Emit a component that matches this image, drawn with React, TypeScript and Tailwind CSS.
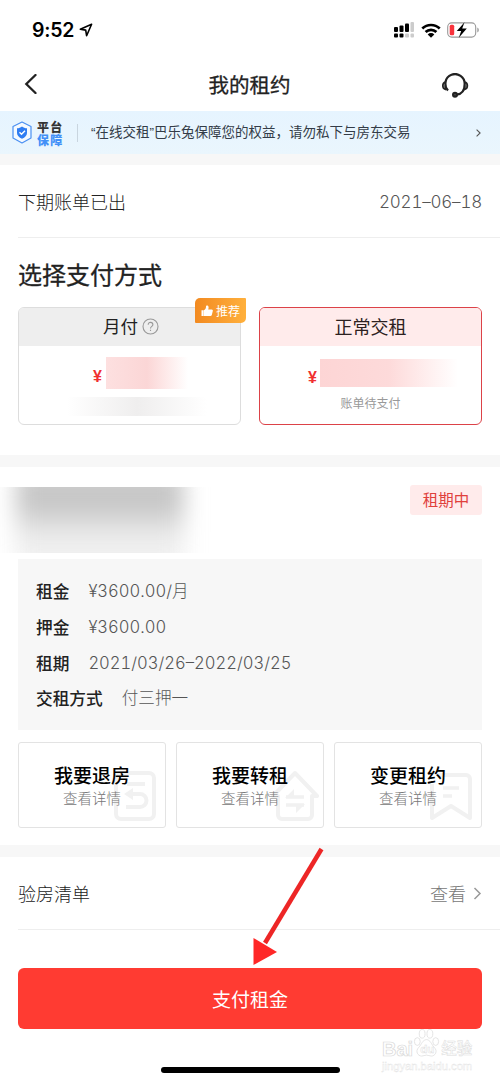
import React from 'react';

type DetailRow = {
  label: string;
  value: string;
};

type ActionItem = {
  title: string;
  icon: React.ReactNode;
};

const details: DetailRow[] = [
  { label: '租金', value: '¥3600.00/月' },
  { label: '押金', value: '¥3600.00' },
  { label: '租期', value: '2021/03/26–2022/03/25' },
  { label: '交租方式', value: '付三押一' },
];

const CheckoutIcon = () => (
  <svg className="h-[52px] w-[44px]" viewBox="0 0 44 52" fill="none" stroke="currentColor" strokeWidth="4">
    <rect x="3" y="3" width="38" height="46" rx="5" />
    <path d="M14 14h18M15 24h12a5.500 5.500 0 0 1 0 13H13" />
    <path d="M20 18v12l-9-6z" fill="currentColor" stroke="none" />
  </svg>
);

const SubletIcon = () => (
  <svg className="-mr-1 h-[52px] w-[48px]" viewBox="0 0 48 52" fill="none" stroke="currentColor" strokeWidth="4" strokeLinejoin="round">
    <path d="M7 26H2L24 3l22 23h-5v19a4 4 0 0 1-4 4H11a4 4 0 0 1-4-4z" />
    <path d="M15 27h18M15 35h18" strokeWidth="3.500" />
    <path d="M23 19v9h-9zM25 34h9l-9 9z" fill="currentColor" stroke="none" />
  </svg>
);

const LeaseIcon = () => (
  <svg className="h-[50px] w-[44px]" viewBox="0 0 44 50" fill="none" stroke="currentColor" strokeWidth="4" strokeLinejoin="round">
    <path d="M8 3h29a4 4 0 0 1 4 4v39L22 34 3 46V12" />
    <path d="M14 16h16M14 24h9" strokeWidth="3.500" />
  </svg>
);

const actions: ActionItem[] = [
  { title: '我要退房', icon: <CheckoutIcon /> },
  { title: '我要转租', icon: <SubletIcon /> },
  { title: '变更租约', icon: <LeaseIcon /> },
];

const StatusBar = () => (
  <div className="flex h-[60px] items-center justify-between pl-8 pr-[20px]">
    <div className="flex items-center gap-[5px]">
      <span className="mt-[2px] font-['Inter'] text-[19.500px] font-semibold tracking-[-0.200px] text-black">9:52</span>
      <svg className="h-[14px] w-[14px]" viewBox="0 0 14 14" fill="none" stroke="#000" strokeWidth="1.600" strokeLinejoin="round">
        <path d="M12.600 1.300 1.300 6.200l5.400.9.900 5.600z" />
      </svg>
    </div>
    <div className="flex items-center gap-[7px]">
      <svg className="h-[16px] w-[20px]" viewBox="0 0 20 16">
        <g fill="#000">
          <rect x="0" y="5" width="4" height="5" rx="1" />
          <rect x="5.500" y="3.500" width="4" height="6.500" rx="1" />
          <rect x="11" y="1.500" width="4" height="8.500" rx="1" />
          <rect x="0" y="11.500" width="4" height="4" rx="1" />
          <rect x="5.500" y="11.500" width="4" height="4" rx="1" />
        </g>
        <g fill="#ccc">
          <rect x="16.500" y="0" width="3.500" height="10" rx="1" />
          <rect x="11" y="11.500" width="4" height="4" rx="1" />
          <rect x="16.500" y="11.500" width="3.500" height="4" rx="1" />
        </g>
      </svg>
      <svg className="h-[15px] w-[20px]" viewBox="0 0 20 15" fill="none" stroke="#000" strokeWidth="2.700">
        <path d="M1.300 5.500a12.500 12.500 0 0 1 17.400 0M4.600 9a7.700 7.700 0 0 1 10.800 0" />
        <path d="M10 14.700 6.700 11.400a4.700 4.700 0 0 1 6.600 0z" fill="#000" stroke="none" />
      </svg>
      <svg className="-ml-px h-[16px] w-[33px]" viewBox="0 0 33 16">
        <rect x=".7" y=".9" width="28" height="14.200" rx="4" fill="none" stroke="#999" strokeWidth="1.100" />
        <rect x="2.700" y="2.800" width="4.500" height="10.400" rx="1.500" fill="#f8333c" />
        <path d="M17.500.3 9.800 9h4.400l-2.400 6.700 8-9.200h-4.600z" fill="#000" />
        <path d="M30.300 5.500v5c2-.8 2-4.200 0-5z" fill="#999" />
      </svg>
    </div>
  </div>
);

const NavBar = () => (
  <header className="flex h-[51px] items-center justify-between pl-[24px] pr-[31px]">
    <svg className="h-[20px] w-[28px] -translate-y-[2px]" viewBox="0 0 28 20" fill="none" stroke="#222" strokeWidth="2.300" strokeLinecap="round">
      <path d="M11.500 1 2.300 10l9.200 9" />
    </svg>
    <h1 className="translate-x-[3px] translate-y-[-1px] text-[20.500px] text-[#222] [-webkit-text-stroke:0.300px_#222]">我的租约</h1>
    <svg className="h-[26px] w-[28px]" viewBox="0 0 28 26" fill="none" stroke="#222" strokeWidth="2.200">
      <path d="M7 17.500A9.700 9.700 0 1 1 23.700 11c0 6-3 10-8 10.700" />
      <path d="M4.500 9C.8 10 .8 15.500 4.500 16.500zM23.700 9c3.700 1 3.700 6.500 0 7.500z" fill="#777" strokeWidth="1.500" />
      <circle cx="14" cy="21.800" r="1.900" fill="#555" />
    </svg>
  </header>
);

const GuaranteeBanner = () => (
  <div className="flex h-[43px] items-center bg-gradient-to-b from-[#e6f4ff] to-[#eaf6fd] pl-[12px] pr-[19px]">
    <svg className="h-[23px] w-[20px]" viewBox="0 0 20 23">
      <path d="M10 1 19 5.500v11.500l-9 5-9-5V5.500z" fill="#f5faff" stroke="#4a90f2" strokeWidth="1.200" strokeLinejoin="round" />
      <path d="M10 5.500c1.500 1.200 3 1.700 5 1.800v4.700c0 2.600-2 4.400-5 5.700-3-1.300-5-3.100-5-5.700V7.300c2-.1 3.500-.6 5-1.800z" fill="#2f7df2" />
      <path d="m7.500 11.300 2 2 3.500-3.600" fill="none" stroke="#fff" strokeWidth="1.400" />
    </svg>
    <div className="ml-[5px] flex w-[28px] flex-col text-[12px] font-black leading-[13px] tracking-[1.200px]">
      <span className="text-[#333]">平台</span>
      <span className="text-[#4290f7]">保障</span>
    </div>
    <div className="ml-[12px] h-[18px] w-px bg-[#c9d5df]" />
    <p className="ml-[13px] flex-1 whitespace-nowrap pt-[2px] font-['Liberation_Sans','Noto_Sans_CJK_SC',sans-serif] text-[13.500px] text-[#333c48]">“在线交租”巴乐兔保障您的权益，请勿私下与房东交易</p>
    <svg className="h-[8px] w-[5px]" viewBox="0 0 5 8" fill="none" stroke="#555" strokeWidth="1.100">
      <path d="m.6.600 3.500 3.400L.6 7.400" />
    </svg>
  </div>
);

const Divider = () => <div className="h-[12px] bg-[#f7f7f7]" />;

const PaymentOptions = () => (
  <div className="mt-[16px] flex gap-[18px] px-[18px]">
    <div className="relative h-[118px] flex-1 rounded-[6px] border border-[#ddd]">
      <div className="flex h-[38px] items-center justify-center gap-[4px] rounded-t-[5px] bg-[#eee] pb-[2px] pl-[3px] text-[17.500px] text-[#222]">
        <span>月付</span>
        <svg className="h-[17px] w-[17px]" viewBox="0 0 17 17" fill="none" stroke="#999" strokeWidth="1.100">
          <circle cx="8.500" cy="8.500" r="7.500" />
          <path d="M6.200 6.700c0-3.200 4.700-3 4.700 0 0 1.700-2.400 1.700-2.400 3.800M8.500 11.700v1.300" />
        </svg>
      </div>
      <div className="mt-[11px] flex items-center pl-[74px]">
        <span className="mt-[8px] w-[13px] font-['Liberation_Sans'] text-[16px] font-bold leading-none text-[#f03030]">¥</span>
        <div className="h-[32px] w-[82px] bg-gradient-to-r from-[#fde0e0] via-[#fbd6d6] to-white" />
      </div>
      <div className="ml-[48px] mt-[8px] h-[19px] w-[140px] bg-gradient-to-r from-white via-[#efeeee] to-white" />
      <div className="absolute right-[-6px] top-[-10px] flex h-[25px] w-[51px] items-center justify-center gap-[3px] rounded-bl-[1px] rounded-br-[5px] rounded-tl-[5px] rounded-tr-[1px] bg-gradient-to-r from-[#f28a20] to-[#ffb03c] text-[12px] text-white">
        <svg className="h-[12px] w-[12px]" viewBox="0 0 12 12" fill="#fff">
          <path d="M.5 5.200h2v5.800h-2zM2.800 5.200C4.800 4.300 5 2.800 5 1.500 5 .200 7.600.200 7.600 2.300c0 .9-.2 1.500-.4 2.100h3.500c1 0 1.300.8 1.100 1.600l-1 4c-.2.700-.7 1-1.300 1H2.800z" />
        </svg>
        <span>推荐</span>
      </div>
    </div>
    <div className="h-[118px] flex-1 rounded-[6px] border border-[#dc4248]">
      <div className="flex h-[38px] items-center justify-center rounded-t-[5px] bg-[#ffebeb] pb-[2px] text-[18px] text-[#2c2020]">正常交租</div>
      <div className="mt-[13px] flex items-center pl-[48px]">
        <span className="mt-[9px] w-[12px] font-['Liberation_Sans'] text-[16px] font-bold leading-none text-[#f03030]">¥</span>
        <div className="h-[28px] w-[138px] bg-gradient-to-r from-[#fdd5d5] via-[#fddada] to-white" />
      </div>
      <div className="mt-[7px] text-center text-[12px] leading-[18px] text-[#999]">账单待支付</div>
    </div>
  </div>
);

const LeaseHeader = () => (
  <div className="flex h-[92px] items-start justify-between pr-[18px] pt-[18px]">
    <div className="mt-[2px] h-[66px] w-[255px] overflow-hidden">
      <div className="-mt-[16px] ml-[16px] h-[96px] w-[168px] bg-gradient-to-b from-[#c8c8c8] via-[#c6c6c6] via-35% to-[#efefef] to-70% blur-[11px]" />
    </div>
    <span className="flex h-[30px] w-[72px] items-center justify-center rounded-[3px] bg-[#ffebeb] text-[15.500px] text-[#e0403c]">租期中</span>
  </div>
);

const Watermark = () => (
  <div className="pointer-events-none absolute left-[382px] top-[1031px] w-[100px] text-white">
    <div className="flex items-center font-['Liberation_Sans','Noto_Sans_CJK_SC',sans-serif] text-[20px] font-bold leading-[36px] [-webkit-text-stroke:0.700px_#d8d8d8]">
      <span>Bai</span>
      <svg className="h-[30px] w-[27px] -translate-y-[6px]" viewBox="0 0 27 31" fill="#fff" stroke="#ddd" strokeWidth=".8">
        <ellipse cx="4" cy="14" rx="3" ry="4" />
        <ellipse cx="9" cy="6" rx="3" ry="4.500" />
        <ellipse cx="17" cy="6" rx="3" ry="4.500" />
        <ellipse cx="23" cy="14" rx="3" ry="4" />
        <path d="M13.500 12c4 0 5 5 8 8 4 4 1 9-3 9-2 0-3-1-5-1s-3 1-5 1c-4 0-7-5-3-9 3-3 4-8 8-8z" />
        <text x="7" y="26" fontSize="12" strokeWidth=".5">du</text>
      </svg>
      <span className="ml-px text-[15.500px] font-medium [-webkit-text-stroke:0.500px_#dcdcdc]">经验</span>
    </div>
    <div className="-mt-[8px] font-['Liberation_Sans'] text-[11.200px] leading-[14px] [-webkit-text-stroke:0.350px_#e2e2e2]">jingyan.baidu.com</div>
  </div>
);

const App = () => {
  return (
    <div className="relative h-[1082px] w-[500px] overflow-hidden bg-white font-['Noto_Sans_CJK_SC',sans-serif]">
      <StatusBar />
      <NavBar />
      <GuaranteeBanner />
      <div className="h-[11px] bg-[#f7f7f7]" />

      <section>
        <div className="ml-[18px] flex h-[73px] items-center justify-between border-b border-[#eee] pr-[18px]">
          <span className="text-[18px] font-light text-[#222]">下期账单已出</span>
          <span className="mt-[3px] font-['Inter'] text-[17px] font-light tabular-nums tracking-[-0.200px] text-[#555]">2021–06–18</span>
        </div>
        <h2 className="mt-[18px] px-[18px] text-[24px] leading-[35px] text-[#222] [-webkit-text-stroke:0.300px_#222]">选择支付方式</h2>
        <PaymentOptions />
      </section>

      <div className="mt-[30px]">
        <Divider />
      </div>

      <section>
        <LeaseHeader />
        <dl className="mx-[18px] flex h-[171px] flex-col bg-[#f7f7f7] pl-[18px] pt-[15px]">
          {details.map((row) => (
            <div key={row.label} className="flex h-[35.700px] items-center gap-[19px]">
              <dt className="text-[16.700px] font-medium text-[#222]">{row.label}</dt>
              <dd className="font-['Inter','Noto_Sans_CJK_SC',sans-serif] text-[16.600px] font-light tabular-nums text-[#555]">{row.value}</dd>
            </div>
          ))}
        </dl>
        <div className="mt-[12px] flex gap-[10px] px-[18px]">
          {actions.map((item) => (
            <button key={item.title} type="button" className="relative h-[86px] flex-1 rounded-[3px] border border-[#e3e3e3] pb-[2px]">
              <span className="absolute bottom-[5px] right-[8px] text-[#f1f1f1]">{item.icon}</span>
              <span className="relative block text-[19px] font-medium leading-[27px] text-black">{item.title}</span>
              <span className="relative block text-[14.500px] font-light leading-[20px] text-[#777]">查看详情</span>
            </button>
          ))}
        </div>
      </section>

      <div className="mt-[17px]">
        <Divider />
      </div>

      <section className="ml-[18px] flex h-[73px] items-center justify-between border-b border-[#eee] pr-[18px]">
        <span className="text-[18px] font-light text-[#222]">验房清单</span>
        <div className="flex items-center gap-[7px]">
          <span className="text-[18px] font-light text-[#777]">查看</span>
          <svg className="h-[13px] w-[9px]" viewBox="0 0 9 13" fill="none" stroke="#999" strokeWidth="1.500">
            <path d="m1.500 1 5.500 5.500L1.500 12" />
          </svg>
        </div>
      </section>

      <button type="button" className="mx-[18px] mt-[38px] flex h-[61px] w-[464px] items-center justify-center rounded-[6px] bg-[#ff3b32] pt-[2px] text-[19px] text-white">
        支付租金
      </button>
      <div className="mx-auto mt-[38px] h-[6px] w-[179px] rounded-full bg-black" />

      <svg className="pointer-events-none absolute left-[250px] top-[845px] h-[122px] w-[76px]" viewBox="0 0 76 122">
        <path d="M71.500 4 15 98" stroke="#ed2626" strokeWidth="4.500" />
        <path d="M3.500 93v27L27 107z" fill="#ff2727" />
      </svg>
      <Watermark />
    </div>
  );
};

export default App;
